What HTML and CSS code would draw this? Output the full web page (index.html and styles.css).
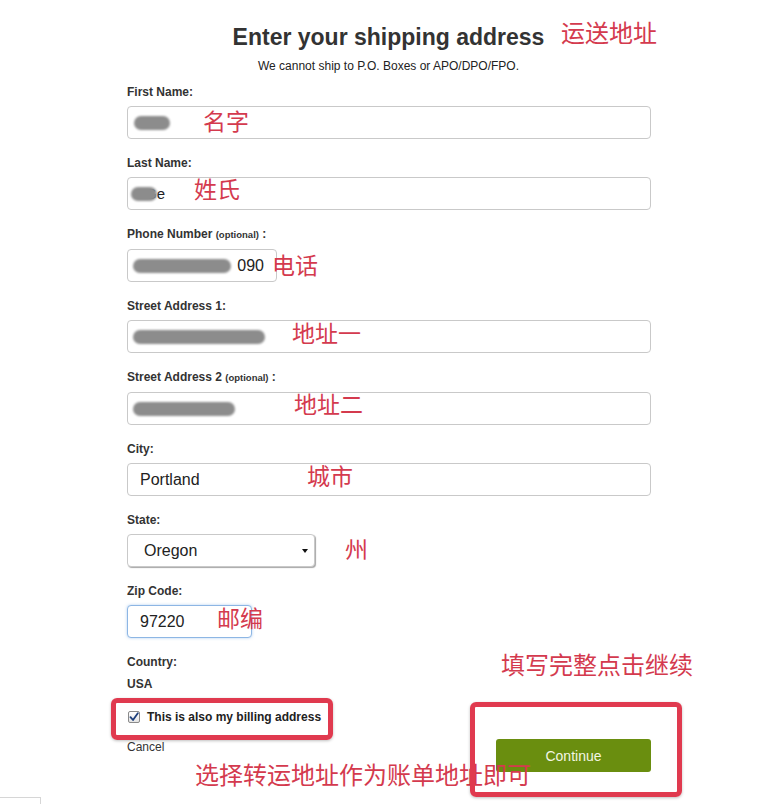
FILE: index.html
```html
<!DOCTYPE html>
<html lang="en">
<head>
  <meta charset="UTF-8" />
  <title>Shipping address</title>
  <link rel="stylesheet" href="styles.css">
</head>
<body>
<div class="page">

  <h1 class="title">Enter your shipping address</h1>
  <p class="subtitle">We cannot ship to P.O. Boxes or APO/DPO/FPO.</p>

  <form class="form">
    <div class="field">
      <label>First Name:</label>
      <div class="input"><span class="blob blob-first"></span></div>
    </div>
    <div class="field">
      <label>Last Name:</label>
      <div class="input"><span class="blob blob-last"></span><span class="peek">Ge</span></div>
    </div>
    <div class="field">
      <label>Phone Number <small>(optional)</small> :</label>
      <div class="input input-phone"><span class="blob blob-phone"></span>090</div>
    </div>
    <div class="field">
      <label>Street Address 1:</label>
      <div class="input"><span class="blob blob-street1"></span></div>
    </div>
    <div class="field">
      <label>Street Address 2 <small>(optional)</small> :</label>
      <div class="input"><span class="blob blob-street2"></span></div>
    </div>
    <div class="field">
      <label>City:</label>
      <div class="input">Portland</div>
    </div>
    <div class="field">
      <label>State:</label>
      <div class="select">
        Oregon
        <span class="select-arrow"></span>
      </div>
    </div>
    <div class="field">
      <label>Zip Code:</label>
      <div class="input input-zip">97220</div>
    </div>

    <div class="bottom">
      <div class="bottom-left">
        <label>Country:</label>
        <div class="country">USA</div>
        <div class="billing">
          <span class="check">
            <svg width="10" height="10" viewBox="0 0 10 10"><path d="M1.5 5.2 L4 8 L8.8 1.2" fill="none" stroke="#1d3f7c" stroke-width="1.8" stroke-linecap="round" stroke-linejoin="round"/></svg>
          </span>
          This is also my billing address
        </div>
        <a class="cancel" href="#">Cancel</a>
      </div>
      <button type="button" class="continue">Continue</button>
    </div>
  </form>

  <!-- Anmerkungen -->
  <span class="note note-title">运送地址</span>
  <span class="note note-first">名字</span>
  <span class="note note-last">姓氏</span>
  <span class="note note-phone">电话</span>
  <span class="note note-street1">地址一</span>
  <span class="note note-street2">地址二</span>
  <span class="note note-city">城市</span>
  <span class="note note-state">州</span>
  <span class="note note-zip">邮编</span>
  <span class="note note-continue">填写完整点击继续</span>
  <span class="note note-billing">选择转运地址作为账单地址即可</span>

  <div class="mark mark-billing"></div>
  <div class="mark mark-continue"></div>

  <div class="corner"></div>
</div>
</body>
</html>
```

FILE: styles.css
```css
body {
  margin: 0;
  background: #fff;
  font-family: "Liberation Sans", Arial, sans-serif;
  color: #333;
}
.page {
  position: relative;
  width: 771px;
  height: 804px;
  overflow: hidden;
}
.title {
  margin: 0;
  padding: 23px 0 0 6px;
  font-size: 23px;
  line-height: 28px;
  font-weight: bold;
  text-align: center;
  color: #333;
}
.subtitle {
  margin: 8px 0 0 6px;
  font-size: 12px;
  line-height: 14px;
  text-align: center;
  color: #222;
}
.form {
  width: 524px;
  margin: 12px 0 0 127px;
}
.field {
  margin-bottom: 17px;
}
.form label {
  display: block;
  font-size: 12px;
  line-height: 14px;
  font-weight: bold;
  color: #333;
  margin-bottom: 7px;
}
.form label small {
  font-size: 9.5px;
}
.input,
.select {
  box-sizing: border-box;
  height: 33px;
  border: 1px solid #c9c9c9;
  border-radius: 4px;
  background: #fff;
  padding: 0 12px;
  font-size: 16px;
  color: #222;
  display: flex;
  align-items: center;
}
.input-phone {
  width: 150px;
  padding-left: 5px;
}
.input-zip {
  width: 125px;
  border-color: #8db6e4;
  box-shadow: 0 0 3px rgba(100, 160, 230, 0.5);
}
.select {
  position: relative;
  width: 188px;
  padding-left: 16px;
  box-shadow: 1px 1px 1px rgba(0, 0, 0, 0.35);
}
.select-arrow {
  position: absolute;
  right: 6px;
  top: 14px;
  border-left: 3px solid transparent;
  border-right: 3px solid transparent;
  border-top: 4px solid #111;
}
.blob {
  display: inline-block;
  height: 14px;
  border-radius: 7px;
  background: #8c8c8c;
  filter: blur(1px);
}
.blob-first { width: 36px; margin-left: -6px; }
.blob-last { width: 26px; margin-left: -9px; }
.blob-phone { width: 100px; margin-right: 6px; }
.blob-street1 { width: 132px; margin-left: -7px; }
.blob-street2 { width: 102px; margin-left: -7px; }
.peek {
  margin-left: -12px;
  font-size: 15px;
}
.bottom {
  display: flex;
  justify-content: space-between;
  align-items: flex-start;
}
.bottom-left label {
  margin-bottom: 8px;
}
.country {
  font-size: 12px;
  line-height: 14px;
  font-weight: bold;
}
.billing {
  display: flex;
  align-items: center;
  margin-top: 19px;
  font-size: 12px;
  line-height: 14px;
  font-weight: bold;
  color: #222;
}
.check {
  box-sizing: border-box;
  width: 12px;
  height: 12px;
  margin: 0 7px 0 1px;
  border: 1px solid #8a8a8a;
  border-radius: 2px;
  background: linear-gradient(#fff, #e4e4e4);
  display: flex;
  align-items: center;
  justify-content: center;
}
.cancel {
  display: block;
  margin-top: 16px;
  font-size: 12px;
  line-height: 14px;
  color: #333;
  text-decoration: none;
}
.continue {
  width: 155px;
  height: 33px;
  margin-top: 84px;
  border: none;
  border-radius: 3px;
  background: #6a8e0f;
  color: #f3f6e4;
  font-family: "Liberation Sans", Arial, sans-serif;
  font-size: 14px;
}
.note {
  position: absolute;
  font-family: "Noto Sans CJK SC", sans-serif;
  font-size: 23px;
  line-height: 23px;
  color: #d43a4e;
  white-space: nowrap;
}
.note-title { left: 561px; top: 20px; font-size: 24px; }
.note-first { left: 203px; top: 109px; }
.note-last { left: 194px; top: 177px; }
.note-phone { left: 272px; top: 253px; }
.note-street1 { left: 292px; top: 321px; }
.note-street2 { left: 294px; top: 392px; }
.note-city { left: 307px; top: 464px; }
.note-state { left: 345px; top: 537px; }
.note-zip { left: 217px; top: 606px; }
.note-continue { left: 501px; top: 652px; font-size: 24px; line-height: 24px; }
.note-billing { left: 195px; top: 762px; font-size: 24px; line-height: 24px; }
.mark {
  position: absolute;
  box-sizing: border-box;
  border: 5px solid #e03a4f;
  border-radius: 6px;
  box-shadow: 0 1px 3px rgba(0, 0, 0, 0.25);
}
.mark-billing {
  left: 111px;
  top: 698px;
  width: 222px;
  height: 42px;
}
.mark-continue {
  left: 470px;
  top: 702px;
  width: 212px;
  height: 95px;
}
.corner {
  position: absolute;
  left: 0;
  bottom: -4px;
  width: 40px;
  height: 10px;
  border-top: 1px solid #d6d6d6;
  border-right: 1px solid #d6d6d6;
}
```
